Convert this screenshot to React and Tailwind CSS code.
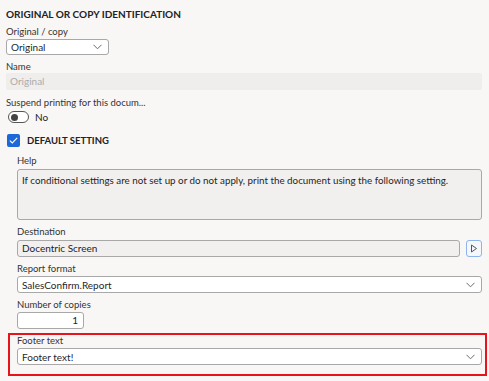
import React from 'react'

const Chevron = () => (
    <svg width="9" height="6" viewBox="0 0 9 6" className="shrink-0">
        <path d="M0.5 0.8 L4.5 4.8 L8.5 0.8" fill="none" stroke="#6b6b6b" strokeWidth="1" />
    </svg>
)

const Label = ({ children, className = '' }) => (
    <div className={`h-[12px] leading-[12px] text-[9.5px] text-[#333333] whitespace-nowrap ${className}`}>{children}</div>
)

const Select = ({ value, className = '' }) => (
    <div className={`flex items-center justify-between h-[17px] border border-[#a8a8a8] rounded-[3px] bg-white pl-[4px] pr-[6px] text-[10px] text-[#1f1f1f] ${className}`}>
        <span className="leading-none">{value}</span>
        <Chevron />
    </div>
)

const App = () => {
    return (
        <main className="w-[489px] h-[381px] overflow-hidden bg-[#f8f7f6] pl-[6px] pr-[7px] pt-[8px]" style={{ fontFamily: 'Lato, "Noto Sans", sans-serif' }}>
            <h1 className="h-[13px] leading-[13px] text-[10px] font-bold text-[#222222]">ORIGINAL OR COPY IDENTIFICATION</h1>

            <Label className="mt-[5px]">Original / copy</Label>
            <Select value="Original" className="mt-[1px] w-[103px] !h-[16px]" />

            <Label className="mt-[6px]">Name</Label>
            <div className="h-[17px] bg-[#efeeed] rounded-[2px] pl-[4px] flex items-center text-[10px] text-[#ababab]">Original</div>

            <Label className="mt-[7px]">Suspend printing for this docum...</Label>
            <div className="mt-[2px] ml-[2px] flex items-center gap-[6px] h-[12px]">
                <div className="w-[21px] h-[12px] rounded-full border border-[#555555] flex items-center pl-[2px] bg-white">
                    <div className="w-[7px] h-[7px] rounded-full bg-[#444444]" />
                </div>
                <span className="text-[10px] text-[#1f1f1f] leading-none">No</span>
            </div>

            <div className="mt-[11px] ml-[1px] flex items-center gap-[7px] h-[13px]">
                <div className="w-[13px] h-[13px] rounded-[2px] bg-[#1c68d8] flex items-center justify-center">
                    <svg width="9" height="7" viewBox="0 0 9 7">
                        <path d="M0.8 3.6 L3.3 6 L8.2 0.9" fill="none" stroke="white" strokeWidth="1.1" />
                    </svg>
                </div>
                <span className="text-[9.5px] font-bold text-[#222222] leading-none">DEFAULT SETTING</span>
            </div>

            <section className="pl-[11px]">
                <Label className="mt-[8px]">Help</Label>
                <div className="mt-[2px] h-[51px] border border-[#a8a8a8] rounded-[3px] bg-[#f1f0ef] px-[4px] pt-[4px] text-[9.8px] text-[#1f1f1f] leading-[13px] whitespace-nowrap">
                    If conditional settings are not set up or do not apply, print the document using the following setting.
                </div>

                <Label className="mt-[6px]">Destination</Label>
                <div className="mt-[2px] flex gap-[6px]">
                    <div className="flex-1 h-[17px] border border-[#a8a8a8] rounded-[3px] bg-[#f1f0ef] pl-[4px] flex items-center text-[10px] text-[#1f1f1f]">Docentric Screen</div>
                    <button className="w-[16px] h-[17px] rounded-[3px] border border-[#8fb4ea] bg-[#f4f7fc] flex items-center justify-center">
                        <svg width="8" height="9" viewBox="0 0 8 9">
                            <path d="M1.5 1 L6.5 4.5 L1.5 8 Z" fill="none" stroke="#555555" strokeWidth="1" />
                        </svg>
                    </button>
                </div>

                <Label className="mt-[6px]">Report format</Label>
                <Select value="SalesConfirm.Report" className="mt-[1px]" />

                <Label className="mt-[6px]">Number of copies</Label>
                <div className="mt-[1px] w-[67px] h-[17px] border border-[#a8a8a8] rounded-[3px] bg-white pr-[5px] flex items-center justify-end text-[10px] text-[#1f1f1f]">1</div>

                <div className="mt-[4px] ml-[-9px] mr-[-5px] h-[43px] border-2 border-[#e8141c] pl-[7px] pr-[3px]">
                    <Label>Footer text</Label>
                    <Select value="Footer text!" className="mt-[1px]" />
                </div>
            </section>
        </main>
    )
}

export default App
